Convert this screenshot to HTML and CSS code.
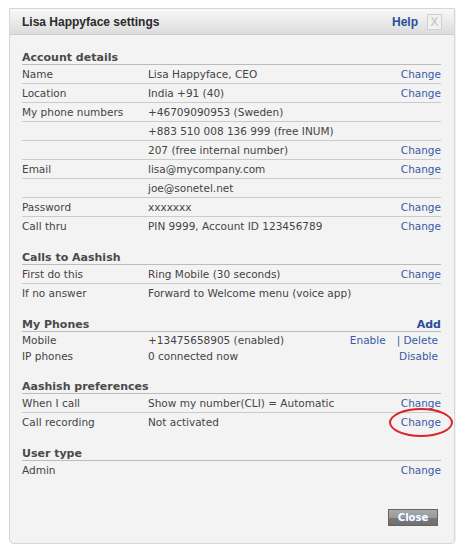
FILE: index.html
```html
<!DOCTYPE html>
<html>
<head>
<meta charset="utf-8">
<link rel="stylesheet" href="styles.css">
</head>
<body>
<div class="dialog">
  <div class="titlebar">
    <span class="title">Lisa Happyface settings</span>
    <span class="tools"><a class="help">Help</a><span class="xbox">X</span></span>
  </div>
  <div class="content">
    <div class="section">
      <div class="sec-head">Account details</div>
      <div class="row"><span class="lbl">Name</span><span class="val">Lisa Happyface, CEO</span><a class="act">Change</a></div>
      <div class="row"><span class="lbl">Location</span><span class="val">India +91 (40)</span><a class="act">Change</a></div>
      <div class="row"><span class="lbl">My phone numbers</span><span class="val">+46709090953 (Sweden)</span><span class="act"></span></div>
      <div class="row"><span class="lbl"></span><span class="val">+883 510 008 136 999 (free INUM)</span><span class="act"></span></div>
      <div class="row"><span class="lbl"></span><span class="val">207 (free internal number)</span><a class="act">Change</a></div>
      <div class="row"><span class="lbl">Email</span><span class="val">lisa@mycompany.com</span><a class="act">Change</a></div>
      <div class="row"><span class="lbl"></span><span class="val">joe@sonetel.net</span><span class="act"></span></div>
      <div class="row"><span class="lbl">Password</span><span class="val">xxxxxxx</span><a class="act">Change</a></div>
      <div class="row last"><span class="lbl">Call thru</span><span class="val">PIN 9999, Account ID 123456789</span><a class="act">Change</a></div>
    </div>
    <div class="section">
      <div class="sec-head">Calls to Aashish</div>
      <div class="row"><span class="lbl">First do this</span><span class="val">Ring Mobile (30 seconds)</span><a class="act">Change</a></div>
      <div class="row last"><span class="lbl">If no answer</span><span class="val">Forward to Welcome menu (voice app)</span><span class="act"></span></div>
    </div>
    <div class="section">
      <div class="sec-head"><span>My Phones</span><a class="add">Add</a></div>
      <div class="row tight"><span class="lbl">Mobile</span><span class="val">+13475658905 (enabled)</span><span class="act pad"><a class="enable">Enable</a><a>| Delete</a></span></div>
      <div class="row tight"><span class="lbl">IP phones</span><span class="val">0 connected now</span><span class="act pad"><a>Disable</a></span></div>
    </div>
    <div class="section">
      <div class="sec-head">Aashish preferences</div>
      <div class="row"><span class="lbl">When I call</span><span class="val">Show my number(CLI) = Automatic</span><a class="act">Change</a></div>
      <div class="row last"><span class="lbl">Call recording</span><span class="val">Not activated</span><a class="act circled">Change<span class="ring"></span></a></div>
    </div>
    <div class="section">
      <div class="sec-head">User type</div>
      <div class="row last"><span class="lbl">Admin</span><span class="val"></span><a class="act">Change</a></div>
    </div>
  </div>
  <div class="footer">
    <button class="close-btn">Close</button>
  </div>
</div>
</body>
</html>
```
FILE: styles.css
```css
html, body {
  margin: 0;
  padding: 0;
  background: #ffffff;
}
body {
  padding: 8px 0 0 9px;
  font-family: "DejaVu Sans", Verdana, sans-serif;
  font-size: 10.5px;
  color: #444444;
}
a {
  color: #3a5aa6;
  text-decoration: none;
}
.dialog {
  width: 444px;
  height: 534px;
  border: 1px solid #d6d6d6;
  border-radius: 0 0 5px 5px;
  background: #f3f3f3;
  display: flex;
  flex-direction: column;
  box-shadow: 1px 1px 1px rgba(0,0,0,0.06);
}
.titlebar {
  height: 25px;
  background: linear-gradient(#f9f9f9, #dcdcdc);
  border-bottom: 1px solid #cccccc;
  display: flex;
  align-items: center;
  justify-content: space-between;
  padding: 0 12px 0 12px;
}
.title {
  font-family: "Liberation Sans", Arial, sans-serif;
  font-weight: bold;
  font-size: 12px;
  color: #2a2a2a;
}
.tools {
  display: flex;
  align-items: center;
  gap: 9px;
}
.help {
  font-family: "Liberation Sans", Arial, sans-serif;
  font-weight: bold;
  font-size: 12px;
  color: #2a4c9c;
}
.xbox {
  width: 13px;
  height: 14px;
  border: 1px solid #cfcfcf;
  background: #f2f2f2;
  color: #c0c0c0;
  font-family: "Liberation Sans", Arial, sans-serif;
  font-size: 12px;
  display: flex;
  align-items: center;
  justify-content: center;
  line-height: 1;
}
.content {
  padding: 0 13px 0 12px;
}
.section {
  margin-top: 13px;
}
.sec-head {
  height: 15px;
  padding-top: 1px;
  line-height: 17px;
  font-weight: bold;
  font-size: 11px;
  color: #4a4a4a;
  border-bottom: 1px solid #bcbcbc;
  display: flex;
  justify-content: space-between;
}
.add {
  font-weight: bold;
  color: #2a4c9c;
}
.row {
  display: grid;
  grid-template-columns: 126px 1fr auto;
  height: 18px;
  line-height: 18px;
  border-bottom: 1px solid #cbcbcb;
}
.row.last {
  border-bottom: none;
}
.row.tight {
  height: 16px;
  line-height: 16px;
  border-bottom: none;
}
.lbl, .val {
  white-space: nowrap;
}
.act {
  text-align: right;
  position: relative;
}
.act.pad {
  padding-right: 3px;
  display: flex;
  gap: 11px;
}
.ring {
  position: absolute;
  left: -12px;
  right: -12px;
  top: -5px;
  bottom: -6px;
  border: 2px solid #d8262a;
  border-radius: 50%;
}
.footer {
  margin-top: auto;
  display: flex;
  justify-content: flex-end;
  padding: 0 16px 17px 0;
}
.close-btn {
  width: 50px;
  height: 17px;
  padding: 0;
  border: 1px solid #6b6262;
  background: linear-gradient(#a9a9a9 0%, #9a9a9a 50%, #777777 55%, #6f6f6f 100%);
  color: #ffffff;
  font-family: "DejaVu Sans", Verdana, sans-serif;
  font-weight: bold;
  font-size: 10px;
  text-shadow: 0 0 2px #7d9fd6;
  line-height: 15px;
}
```
